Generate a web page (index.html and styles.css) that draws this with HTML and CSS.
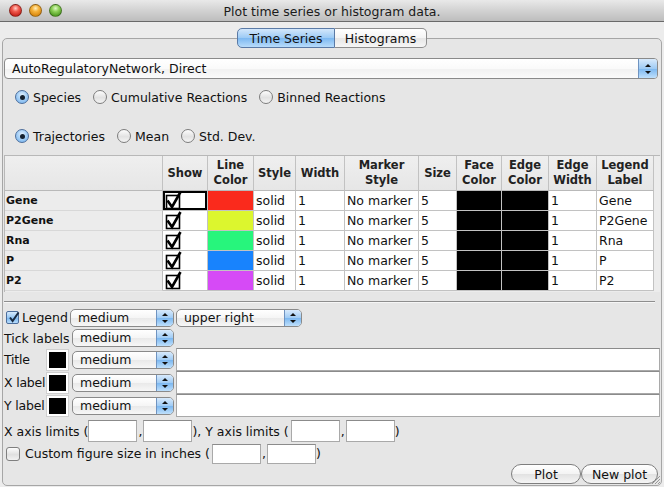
FILE: index.html
```html
<!DOCTYPE html>
<html>
<head>
<meta charset="utf-8">
<title>Plot time series or histogram data.</title>
<link rel="stylesheet" href="styles.css">
</head>
<body>
<div class="window">
  <div class="titlebar">
    <div class="lights"><span class="light red"></span><span class="light yellow"></span><span class="light green"></span></div>
    <div class="title">Plot time series or histogram data.</div>
    <div></div>
  </div>
  <div class="tabs">
    <div class="tab left sel">Time Series</div>
    <div class="tab right">Histograms</div>
  </div>
  <div class="pane">
    <div class="combo big"><span class="ctext">AutoRegulatoryNetwork, Direct</span><span class="carrow"></span></div>

    <div class="radios r1">
      <div class="radio on"><i></i><span>Species</span></div>
      <div class="radio"><i></i><span>Cumulative Reactions</span></div>
      <div class="radio"><i></i><span>Binned Reactions</span></div>
    </div>
    <div class="radios r2">
      <div class="radio on"><i></i><span>Trajectories</span></div>
      <div class="radio"><i></i><span>Mean</span></div>
      <div class="radio"><i></i><span>Std. Dev.</span></div>
    </div>

    <div class="tablewrap">
      <div class="grid">
        <div class="hd corner"></div>
        <div class="hd">Show</div>
        <div class="hd">Line<br>Color</div>
        <div class="hd">Style</div>
        <div class="hd">Width</div>
        <div class="hd">Marker<br>Style</div>
        <div class="hd">Size</div>
        <div class="hd">Face<br>Color</div>
        <div class="hd">Edge<br>Color</div>
        <div class="hd">Edge<br>Width</div>
        <div class="hd">Legend<br>Label</div>

        <div class="rh">Gene</div>
        <div class="cell show focus"><svg width="18" height="20" viewBox="0 0 18 20"><rect x="2.5" y="5.5" width="13" height="13" fill="none" stroke="#000" stroke-width="1.6"/><path d="M3.5 10.5 L8 17 L16.5 2" fill="none" stroke="#000" stroke-width="2.6"/></svg></div>
        <div class="cell sw" style="background:#fa2a1c"></div>
        <div class="cell">solid</div>
        <div class="cell">1</div>
        <div class="cell">No marker</div>
        <div class="cell">5</div>
        <div class="cell sw black"></div>
        <div class="cell sw black"></div>
        <div class="cell">1</div>
        <div class="cell">Gene</div>

        <div class="rh">P2Gene</div>
        <div class="cell show"><svg width="18" height="20" viewBox="0 0 18 20"><rect x="2.5" y="5.5" width="13" height="13" fill="none" stroke="#000" stroke-width="1.6"/><path d="M3.5 10.5 L8 17 L16.5 2" fill="none" stroke="#000" stroke-width="2.6"/></svg></div>
        <div class="cell sw" style="background:#dcf62e"></div>
        <div class="cell">solid</div>
        <div class="cell">1</div>
        <div class="cell">No marker</div>
        <div class="cell">5</div>
        <div class="cell sw black"></div>
        <div class="cell sw black"></div>
        <div class="cell">1</div>
        <div class="cell">P2Gene</div>

        <div class="rh">Rna</div>
        <div class="cell show"><svg width="18" height="20" viewBox="0 0 18 20"><rect x="2.5" y="5.5" width="13" height="13" fill="none" stroke="#000" stroke-width="1.6"/><path d="M3.5 10.5 L8 17 L16.5 2" fill="none" stroke="#000" stroke-width="2.6"/></svg></div>
        <div class="cell sw" style="background:#27f57c"></div>
        <div class="cell">solid</div>
        <div class="cell">1</div>
        <div class="cell">No marker</div>
        <div class="cell">5</div>
        <div class="cell sw black"></div>
        <div class="cell sw black"></div>
        <div class="cell">1</div>
        <div class="cell">Rna</div>

        <div class="rh">P</div>
        <div class="cell show"><svg width="18" height="20" viewBox="0 0 18 20"><rect x="2.5" y="5.5" width="13" height="13" fill="none" stroke="#000" stroke-width="1.6"/><path d="M3.5 10.5 L8 17 L16.5 2" fill="none" stroke="#000" stroke-width="2.6"/></svg></div>
        <div class="cell sw" style="background:#1883fd"></div>
        <div class="cell">solid</div>
        <div class="cell">1</div>
        <div class="cell">No marker</div>
        <div class="cell">5</div>
        <div class="cell sw black"></div>
        <div class="cell sw black"></div>
        <div class="cell">1</div>
        <div class="cell">P</div>

        <div class="rh">P2</div>
        <div class="cell show"><svg width="18" height="20" viewBox="0 0 18 20"><rect x="2.5" y="5.5" width="13" height="13" fill="none" stroke="#000" stroke-width="1.6"/><path d="M3.5 10.5 L8 17 L16.5 2" fill="none" stroke="#000" stroke-width="2.6"/></svg></div>
        <div class="cell sw" style="background:#d64af6"></div>
        <div class="cell">solid</div>
        <div class="cell">1</div>
        <div class="cell">No marker</div>
        <div class="cell">5</div>
        <div class="cell sw black"></div>
        <div class="cell sw black"></div>
        <div class="cell">1</div>
        <div class="cell">P2</div>
      </div>
    </div>

    <div class="sep"></div>

    <div class="row legend-row">
      <span class="check on"><svg width="13" height="13" viewBox="0 0 13 13"><path d="M3 6.5 L5.6 10 L11.5 1.5" fill="none" stroke="#1a2a40" stroke-width="2"/></svg></span>
      <span class="lbl-legend">Legend</span>
      <div class="combo w104"><span class="ctext">medium</span><span class="carrow"></span></div>
      <div class="combo w126"><span class="ctext">upper right</span><span class="carrow"></span></div>
    </div>
    <div class="row tick-row">
      <span class="lbl-tick">Tick labels</span>
      <div class="combo w102"><span class="ctext">medium</span><span class="carrow"></span></div>
    </div>
    <div class="row label-row">
      <span class="lbl">Title</span>
      <span class="swatch"><span></span></span>
      <div class="combo w102"><span class="ctext">medium</span><span class="carrow"></span></div>
      <span class="field grow"></span>
    </div>
    <div class="row label-row">
      <span class="lbl">X label</span>
      <span class="swatch"><span></span></span>
      <div class="combo w102"><span class="ctext">medium</span><span class="carrow"></span></div>
      <span class="field grow"></span>
    </div>
    <div class="row label-row">
      <span class="lbl">Y label</span>
      <span class="swatch"><span></span></span>
      <div class="combo w102"><span class="ctext">medium</span><span class="carrow"></span></div>
      <span class="field grow"></span>
    </div>

    <div class="row axis-row">
      <span class="txt">X axis limits (</span>
      <span class="field num"></span><span class="txt comma">,</span><span class="field num"></span>
      <span class="txt ylim">), Y axis limits (</span>
      <span class="field num"></span><span class="txt comma">,</span><span class="field num"></span>
      <span class="txt">)</span>
    </div>
    <div class="row custom-row">
      <span class="check"></span>
      <span class="txt custom-lbl">Custom figure size in inches (</span>
      <span class="field num"></span><span class="txt comma">,</span><span class="field num"></span>
      <span class="txt">)</span>
    </div>
    <div class="row buttons">
      <div class="btn plot">Plot</div>
      <div class="btn newplot">New plot</div>
    </div>
    <svg class="grip" width="12" height="12" viewBox="0 0 12 12"><path d="M11 3 L3 11 M11 6 L6 11 M11 9 L9 11" stroke="#9a9a9a" stroke-width="1"/></svg>
  </div>
</div>
</body>
</html>
```

FILE: styles.css
```css
html, body {
  margin: 0;
  padding: 0;
}
body {
  width: 664px;
  height: 487px;
  overflow: hidden;
  background: #e8e8e8;
  font-family: "DejaVu Sans", "Liberation Sans", sans-serif;
  font-size: 12.5px;
  color: #111;
}
.window {
  display: flex;
  flex-direction: column;
  width: 664px;
  height: 487px;
  background: #ececec;
}
.titlebar {
  flex: none;
  height: 22px;
  box-sizing: border-box;
  display: grid;
  grid-template-columns: 1fr auto 1fr;
  align-items: center;
  background: linear-gradient(#e9e9e9, #d2d2d2 50%, #bdbdbd);
  border-bottom: 1px solid #6a6a6a;
}
.lights {
  display: flex;
  gap: 7px;
  padding-left: 9px;
}
.light {
  width: 13px;
  height: 13px;
  border-radius: 50%;
  box-sizing: border-box;
  border: 1px solid rgba(0,0,0,0.35);
}
.light.red { background: radial-gradient(circle at 50% 30%, #ffd0c8 0, #f25c50 35%, #c5221a 80%, #d9463c 100%); }
.light.yellow { background: radial-gradient(circle at 50% 30%, #fff0c0 0, #f6b33c 35%, #d6860f 80%, #e3a132 100%); }
.light.green { background: radial-gradient(circle at 50% 30%, #e0f8c8 0, #8fd25a 35%, #4e9a22 80%, #6cb33a 100%); }
.title {
  color: #1a1a1a;
  padding-top: 1px;
}
.tabs {
  flex: none;
  display: flex;
  justify-content: center;
  padding-top: 6px;
  position: relative;
  z-index: 1;
  margin-bottom: -10px;
}
.tab {
  height: 20px;
  box-sizing: border-box;
  display: flex;
  align-items: center;
  justify-content: center;
  border: 1px solid #8d8d8d;
  background: linear-gradient(#ffffff, #f4f4f4 50%, #e6e6e6 51%, #f6f6f6);
}
.tab.left {
  width: 98px;
  border-radius: 5px 0 0 5px;
}
.tab.right {
  width: 92px;
  border-left: none;
  border-radius: 0 5px 5px 0;
}
.tab.sel {
  border-color: #5a7aa6;
  background: linear-gradient(#d3e7fb, #9bcaf5 50%, #7cb8f1 51%, #b8dcfb);
}
.pane {
  flex: 1;
  margin: 0 2px 1px 2px;
  border: 1px solid #a6a6a6;
  border-radius: 5px;
  background: #e6e6e6;
  padding: 0 1px;
  display: flex;
  flex-direction: column;
  position: relative;
}
.combo {
  display: flex;
  align-items: center;
  box-sizing: border-box;
  height: 18px;
  border: 1px solid #8a8a8a;
  border-radius: 5px;
  background: linear-gradient(#ffffff, #f5f5f5 50%, #e9e9e9 51%, #f7f7f7);
  overflow: hidden;
  flex: none;
}
.combo .ctext {
  flex: 1;
  padding-left: 7px;
  white-space: nowrap;
  line-height: 14px;
}
.combo .carrow {
  width: 16px;
  align-self: stretch;
  position: relative;
  border-left: 1px solid #6f93c0;
  background: linear-gradient(#d8eafc, #9fcbf4 50%, #7bb7f0 51%, #bfe0fc);
}
.combo .carrow::before,
.combo .carrow::after {
  content: "";
  position: absolute;
  left: 50%;
  margin-left: -3px;
  border-left: 3px solid transparent;
  border-right: 3px solid transparent;
}
.combo .carrow::before {
  top: 50%;
  margin-top: -5px;
  border-bottom: 3px solid #111;
}
.combo .carrow::after {
  top: 50%;
  margin-top: 2px;
  border-top: 3px solid #111;
}
.combo.big {
  margin-top: 19px;
  height: 21px;
  border-radius: 4px;
  width: 654px;
  background: linear-gradient(#ffffff, #fafafa 50%, #f1f1f1 51%, #fbfbfb);
}
.combo.big .ctext { padding-left: 7px; }
.combo.big .carrow { width: 18px; }
.radios {
  display: flex;
  align-items: center;
  height: 20px;
  padding-left: 11px;
}
.radios.r1 { margin-top: 8px; }
.radios.r2 { margin-top: 19px; }
.radio {
  display: flex;
  align-items: center;
  gap: 4px;
  margin-right: 12px;
}
.radio i {
  width: 14px;
  height: 14px;
  box-sizing: border-box;
  border-radius: 50%;
  border: 1px solid #7d7d7d;
  background: linear-gradient(#fdfdfd, #e2e2e2 55%, #f4f4f4);
  position: relative;
}
.radio.on i {
  border-color: #4d6e9c;
  background: radial-gradient(circle at 50% 35%, #e2f0fd 0, #a7d0f6 45%, #6fb0ee 100%);
}
.radio.on i::after {
  content: "";
  position: absolute;
  left: 3.5px;
  top: 3.5px;
  width: 5px;
  height: 5px;
  border-radius: 50%;
  background: #14202e;
}
.tablewrap {
  margin-top: 9px;
  height: 137px;
  box-sizing: border-box;
  border-top: 1px solid #b8b8b8;
  border-left: 1px solid #b8b8b8;
  background: #ececec;
  width: 656px;
}
.grid {
  display: grid;
  grid-template-columns: 158px 45px 46px 42px 49px 74px 38px 45px 47px 48px 57px;
  grid-template-rows: 35px repeat(5, 20px);
}
.grid > div {
  box-sizing: border-box;
  border-right: 1px solid #c2c2c2;
  border-bottom: 1px solid #c2c2c2;
  overflow: hidden;
  white-space: nowrap;
}
.hd {
  background: linear-gradient(#efefef, #e6e6e6);
  font-weight: bold;
  font-size: 11.5px;
  line-height: 15px;
  text-align: center;
  display: flex;
  align-items: center;
  justify-content: center;
  color: #222;
  border-bottom-color: #b9b9b9 !important;
}
.rh {
  background: #ececec;
  font-weight: bold;
  font-size: 11px;
  padding-left: 1px;
  display: flex;
  align-items: center;
  border-bottom-color: #d8d8d8 !important;
  border-right-color: #bcbcbc !important;
}
.cell {
  background: #fff;
  padding-left: 2px;
  display: flex;
  align-items: center;
  line-height: 19px;
}
.cell.show { padding-left: 0; align-items: flex-start; }
.cell.show svg { display: block; margin-left: 1px; margin-top: -1px; }
.cell.focus { box-shadow: inset 0 0 0 2px #000; }
.cell.sw { padding: 0; }
.cell.black { background: #000; }
.sep {
  margin-top: 9px;
  width: 651px;
  border-top: 1px solid #8e8e8e;
  border-bottom: 1px solid #f6f6f6;
}
.row {
  display: flex;
  align-items: center;
  flex: none;
}
.legend-row { margin-top: 5px; height: 19px; }
.tick-row { margin-top: 2px; height: 18px; }
.label-row { height: 23px; }
.tick-row + .label-row { margin-top: 1px; }
.check {
  width: 13px;
  height: 13px;
  box-sizing: border-box;
  border: 1px solid #7f7f7f;
  border-radius: 2px;
  background: linear-gradient(#fdfdfd, #e0e0e0 55%, #f2f2f2);
  margin-left: 2px;
  flex: none;
  display: block;
  position: relative;
}
.check svg { position: absolute; left: 0; top: -1px; }
.check.on {
  border-color: #4d6e9c;
  background: linear-gradient(#d6eafc, #98c8f4 50%, #75b4ef 51%, #b8dcfb);
}
.lbl-legend { margin-left: 3px; margin-right: 2px; }
.w104 { width: 104px; }
.w126 { width: 126px; margin-left: 2px; }
.w102 { width: 102px; }
.lbl-tick { width: 68px; white-space: nowrap; }
.lbl {
  width: 42px;
  white-space: nowrap;
  letter-spacing: -0.2px;
  flex: none;
}
.swatch {
  width: 23px;
  height: 22px;
  box-sizing: border-box;
  background: #fff;
  border: 1px solid #cfcfcf;
  padding: 2px;
  margin-right: 3px;
  flex: none;
}
.swatch span {
  display: block;
  width: 100%;
  height: 100%;
  background: #000;
}
.field {
  display: block;
  background: #fff;
  box-sizing: border-box;
  border: 1px solid #a9a9a9;
  border-top-color: #8b8b8b;
  flex: none;
}
.field.grow {
  flex: 1;
  height: 23px;
  margin-left: 2px;
}
.txt { white-space: nowrap; }
.axis-row { margin-top: 3px; height: 22px; }
.axis-row .field.num { height: 22px; }
.field.num { width: 49px; height: 20px; }
.comma { width: 6px; text-align: center; }
.ylim { padding-right: 2px; }
.custom-row { margin-top: 1px; height: 21px; }
.custom-row .check { margin-left: 2px; width: 14px; height: 14px; border-radius: 3px; }
.custom-lbl { margin-left: 5px; margin-right: 2px; }
.buttons {
  justify-content: flex-end;
  height: 20px;
  padding-right: 2px;
}
.btn {
  height: 20px;
  box-sizing: border-box;
  border: 1px solid #7e7e7e;
  border-radius: 10px;
  background: linear-gradient(#ffffff, #f3f3f3 50%, #e2e2e2 51%, #f5f5f5);
  display: flex;
  align-items: center;
  justify-content: center;
}
.btn.plot { width: 70px; }
.btn.newplot { width: 77px; }
.grip {
  position: absolute;
  right: 0;
  bottom: 0;
}
```
